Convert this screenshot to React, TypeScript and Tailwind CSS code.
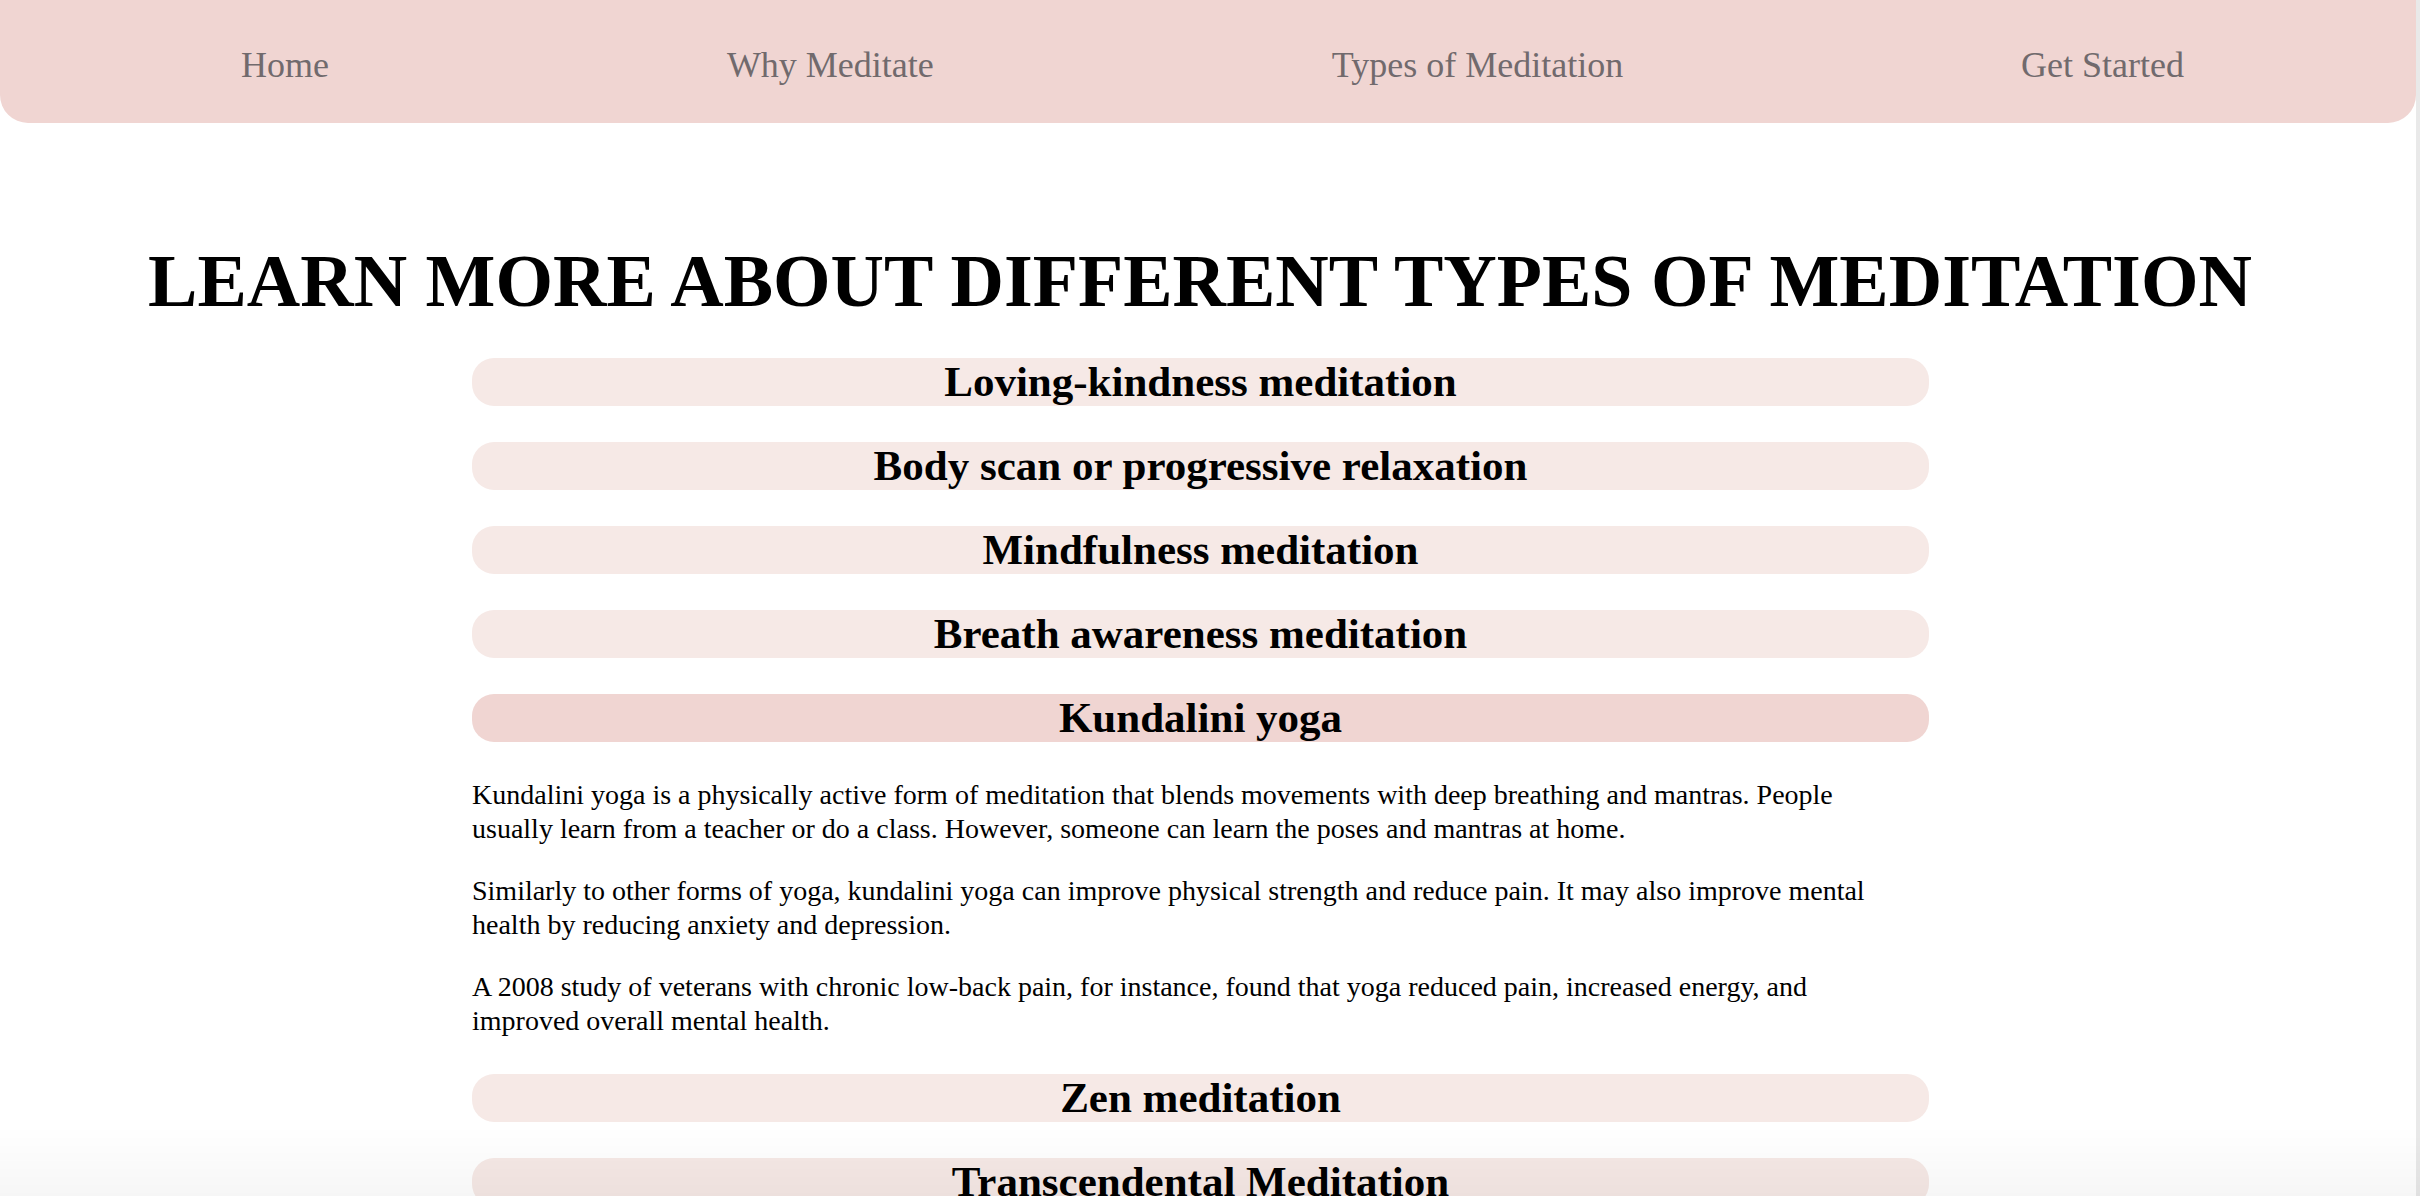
import React, { useState } from 'react';

type Section = {
  title: string;
  body: string[];
};

const sections: Section[] = [
  { title: 'Loving-kindness meditation', body: [] },
  { title: 'Body scan or progressive relaxation', body: [] },
  { title: 'Mindfulness meditation', body: [] },
  { title: 'Breath awareness meditation', body: [] },
  {
    title: 'Kundalini yoga',
    body: [
      'Kundalini yoga is a physically active form of meditation that blends movements with deep breathing and mantras. People usually learn from a teacher or do a class. However, someone can learn the poses and mantras at home.',
      'Similarly to other forms of yoga, kundalini yoga can improve physical strength and reduce pain. It may also improve mental health by reducing anxiety and depression.',
      'A 2008 study of veterans with chronic low-back pain, for instance, found that yoga reduced pain, increased energy, and improved overall mental health.'
    ]
  },
  { title: 'Zen meditation', body: [] },
  { title: 'Transcendental Meditation', body: [] }
];

const navLinks = ['Home', 'Why Meditate', 'Types of Meditation', 'Get Started'];

export default function App() {
  const [open, setOpen] = useState<number | null>(4);

  return (
    <div className="flex min-h-screen bg-white font-['Liberation_Serif','Times_New_Roman',serif] text-black">
      <div className="flex-1">
        {/* Nav */}
        <nav className="flex h-[123px] items-center justify-between rounded-b-[28px] bg-[#f0d5d2] pl-[241px] pr-[232px] pt-[6px]">
          {navLinks.map(link => (
            <a key={link} href="#" className="text-[36px] text-[#716a6d]">
              {link}
            </a>
          ))}
        </nav>

        <main className="pr-[16px]">
          <h1 className="mt-[118px] text-center text-[74px] font-bold leading-[80px]">
            LEARN MORE ABOUT DIFFERENT TYPES OF MEDITATION
          </h1>

          <div className="ml-[472px] mt-[37px] flex w-[1457px] flex-col gap-[36px] pb-[200px]">
            {sections.map((s, i) => (
              <div key={s.title} className="flex flex-col gap-[36px]">
                <button
                  onClick={() => setOpen(open === i ? null : i)}
                  className={`h-[48px] w-full rounded-[22px] text-center text-[43px] font-bold leading-[48px] ${
                    open === i ? 'bg-[#f0d5d2]' : 'bg-[#f6e9e6]'
                  }`}
                >
                  {s.title}
                </button>
                {open === i && s.body.length > 0 && (
                  <div className="flex max-w-[1440px] flex-col gap-[28px]">
                    {s.body.map((p, j) => (
                      <p key={j} className="text-[28px] leading-[34px]">
                        {p}
                      </p>
                    ))}
                  </div>
                )}
              </div>
            ))}
          </div>
        </main>
      </div>

      {/* scrollbar edge */}
      <div className="w-[4px] bg-[#e9e9e9]" />

      {/* bottom fade */}
      <div className="pointer-events-none fixed inset-x-0 bottom-0 h-[70px] bg-gradient-to-b from-black/0 to-black/[0.035]" />
    </div>
  );
}
